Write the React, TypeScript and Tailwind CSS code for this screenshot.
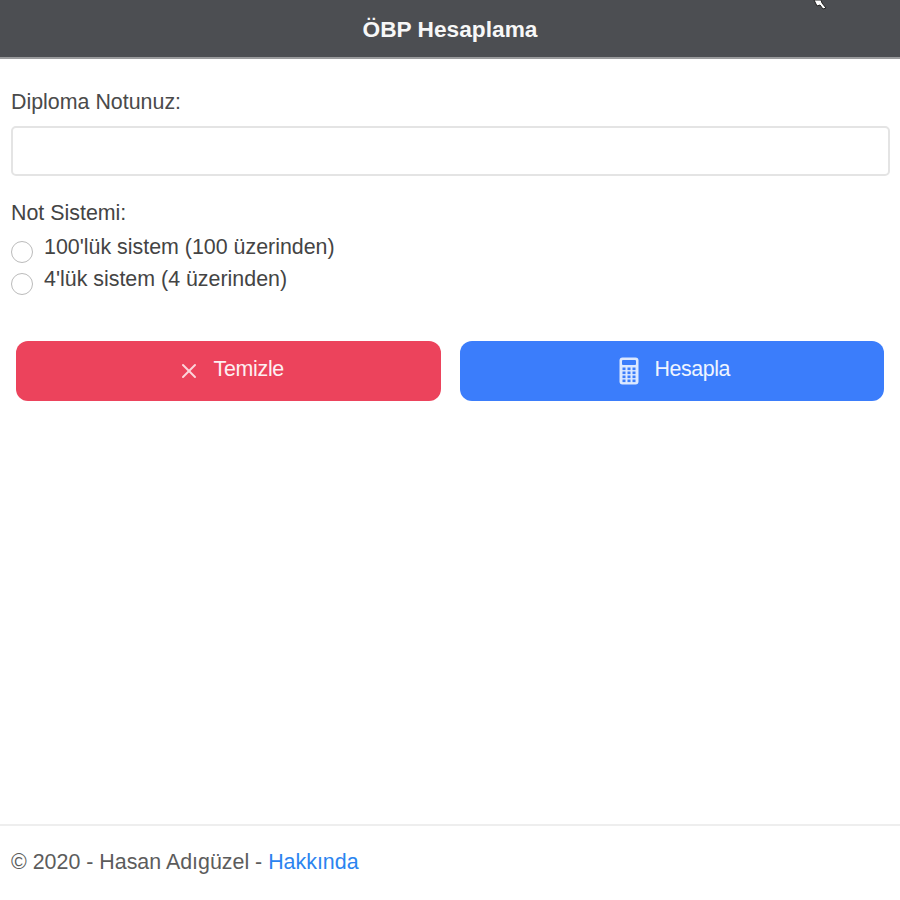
import { X } from "lucide-react";

function CalculatorIcon() {
  return (
    <svg width="20" height="28" viewBox="0 0 20 28" fill="none">
      <rect x="0.5" y="0.5" width="19" height="27" rx="3" fill="#dbe8ff" />
      <rect x="3" y="3" width="14" height="5" rx="1" fill="#3b7dfb" />
      {[10.5, 14.5, 18.5, 22.5].map((y) =>
        [3.5, 8.5, 13.5].map((x) => (
          <rect key={`${x}-${y}`} x={x} y={y} width="3" height="2.6" fill="#3b7dfb" />
        ))
      )}
    </svg>
  );
}

function RadioRow({ label }: { label: string }) {
  return (
    <label className="flex h-[32px] items-start gap-[11px]">
      <span className="mt-[7px] h-[22px] w-[22px] shrink-0 rounded-full border border-[#bbbbbb] bg-white" />
      <span className="mt-[-3px] leading-[32px] text-[#444]">{label}</span>
    </label>
  );
}

export default function App() {
  return (
    <div className="relative flex h-[900px] w-[900px] flex-col overflow-hidden bg-white font-['Liberation_Sans',Arial,sans-serif] text-[21.4px]">
      {/* Header */}
      <header className="flex h-[59px] items-center justify-center border-b-2 border-[#9a9b9d] bg-[#4c4e52] pt-[2px] text-[22.7px] font-bold text-[#f7f7f7]">
        ÖBP Hesaplama
      </header>

      {/* Cursor */}
      <svg className="absolute left-[813px] top-0" width="16" height="10" viewBox="0 0 16 10">
        <path d="M1 0 L8 0 L9 3 L13 8 L10 9 L7 5 L4 6 Z" fill="#fff" stroke="#222" strokeWidth="1" />
      </svg>

      {/* Form */}
      <main className="flex-1 px-[11px] pt-[28px]">
        <p className="leading-[30px] text-[#4a4a4a]">Diploma Notunuz:</p>
        <input
          type="text"
          className="mt-[9px] block h-[50px] w-[879px] rounded-[5px] border-2 border-[#e4e4e4] bg-white"
        />

        <p className="mt-[22px] leading-[30px] text-[#444]">Not Sistemi:</p>
        <div className="mt-[6px]">
          <RadioRow label="100'lük sistem (100 üzerinden)" />
          <RadioRow label="4'lük sistem (4 üzerinden)" />
        </div>

        <div className="mt-[43px] flex gap-[19px] px-[5px]">
          <button className="flex h-[60px] w-[425px] items-center justify-center gap-[13px] rounded-[12px] bg-[#ec435c] pl-[4px] text-[#fdf0f2]">
            <X size={24} strokeWidth={2} className="text-[#fcd5db]" />
            <span className="mb-[3px] tracking-[-0.3px]">Temizle</span>
          </button>
          <button className="flex h-[60px] w-[425px] items-center justify-center gap-[15px] rounded-[12px] bg-[#3b7dfb] pl-[6px] text-[#eef4ff]">
            <CalculatorIcon />
            <span className="mb-[3px] tracking-[-0.4px]">Hesapla</span>
          </button>
        </div>
      </main>

      {/* Footer */}
      <footer className="flex h-[76px] items-start border-t-2 border-[#eeeeee] px-[11px] pt-[21px] leading-[30px] text-[#5c5c5c]">
        <span>
          © 2020 - Hasan Adıgüzel - <a className="text-[#2b84f0]">Hakkında</a>
        </span>
      </footer>
    </div>
  );
}
